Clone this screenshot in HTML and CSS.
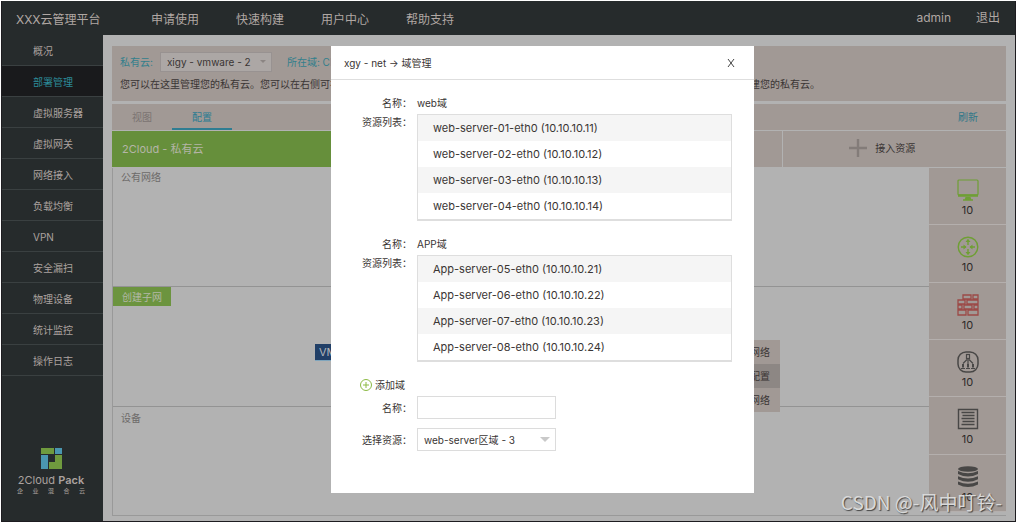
FILE: index.html
```html
<!DOCTYPE html>
<html lang="zh-CN">
<head>
<meta charset="utf-8">
<title>XXX云管理平台</title>
<link rel="stylesheet" href="styles.css">
</head>
<body>
<div class="app">
  <header class="topbar">
    <div class="brand">XXX云管理平台</div>
    <nav class="topnav">
      <a href="#">申请使用</a>
      <a href="#">快速构建</a>
      <a href="#">用户中心</a>
      <a href="#">帮助支持</a>
    </nav>
    <div class="account">
      <a href="#">admin</a>
      <a href="#">退出</a>
    </div>
  </header>

  <div class="columns">
    <aside class="sidebar">
      <nav class="sidenav">
        <a href="#">概况</a>
        <a href="#" class="current">部署管理</a>
        <a href="#">虚拟服务器</a>
        <a href="#">虚拟网关</a>
        <a href="#">网络接入</a>
        <a href="#">负载均衡</a>
        <a href="#">VPN</a>
        <a href="#">安全漏扫</a>
        <a href="#">物理设备</a>
        <a href="#">统计监控</a>
        <a href="#">操作日志</a>
      </nav>
      <div class="product">
        <svg class="product-mark" viewBox="0 0 21 21" aria-hidden="true">
          <path fill="#6f9a3e" d="M0 0h13v6H0zM14 7h7v14H8v-7h6z"/>
          <path fill="#4a96b0" d="M14 0h7v6h-7zM0 7h7v14H0z"/>
        </svg>
        <div class="product-name">2Cloud <b>Pack</b></div>
        <div class="product-sub"><span>企</span><span>业</span><span>混</span><span>合</span><span>云</span></div>
      </div>
    </aside>

    <main class="main">
      <section class="intro">
        <div class="filters">
          <label class="filter-label" for="cloud">私有云:</label>
          <span class="pick pick-dim">
            <select id="cloud"><option>xigy - vmware - 2</option></select>
          </span>
          <span class="filter-label zone">所在域: Cloud</span>
        </div>
        <p>您可以在这里管理您的私有云。您可以在右侧可视化区域中查看公有网络、子网和设备的连接关系，也可以接入新的资源，并按照业务需要来构建您的私有云。</p>
      </section>

      <div class="tabs">
        <a href="#" class="tab">视图</a>
        <a href="#" class="tab active">配置</a>
        <a href="#" class="refresh">刷新</a>
      </div>

      <div class="titlebar">
        <h1>2Cloud - 私有云</h1>
        <div class="blank"></div>
        <button type="button" class="attach">
          <svg viewBox="0 0 18 18" aria-hidden="true"><path d="M9 0v18M0 9h18" stroke="#837c79" stroke-width="2.4"/></svg>
          接入资源
        </button>
      </div>

      <div class="board">
        <div class="lanes">
          <section class="lane lane-public"><h2>公有网络</h2></section>
          <section class="lane lane-subnet"><button type="button" class="create">创建子网</button></section>
          <section class="lane lane-device"><h2>设备</h2></section>
          <div class="node">VMware</div>
          <ul class="node-menu">
            <li>管理网络</li>
            <li class="hover">修改配置</li>
            <li>删除网络</li>
          </ul>
        </div>
        <ul class="stats">
          <li>
            <svg viewBox="0 0 22 22" fill="none" stroke="#6f9f35" aria-hidden="true"><rect x="1" y="1" width="20" height="15" rx="1" stroke-width="1.2"/><path d="M1 16.5h20" stroke-width="2.5"/><path d="M8.5 18h5l1 3h-7z" fill="#6f9f35" stroke="none"/><path d="M6 21h10" stroke-width="1.5"/></svg>
            <span>10</span>
          </li>
          <li>
            <svg viewBox="0 0 22 22" fill="none" stroke="#6f9f35" aria-hidden="true"><circle cx="11" cy="11" r="9.8" stroke-width="1.4"/><path d="M11 9V4M11 13v5M9 11H4M13 11h5" stroke-width="1.4"/><path fill="#6f9f35" stroke="none" d="M11 2.800l2.500 3.200h-5zM11 19.200l2.500-3.200h-5zM6.500 8.500L9.500 11l-3 2.500zM15.500 8.500L12.500 11l3 2.500z"/></svg>
            <span>10</span>
          </li>
          <li>
            <svg viewBox="0 0 22 22" fill="none" stroke="#9c4a47" stroke-width="1.3" aria-hidden="true"><path d="M6 1h8v4H6zM16 1h5v4h-5zM1 6h7v4H1zM10 6h11v4H10zM1 11h4v4H1zM7 11h8v4H7zM17 11h4v4h-4zM1 16h8v5H1zM11 16h10v5H11z"/></svg>
            <span>10</span>
          </li>
          <li>
            <svg viewBox="0 0 22 22" fill="none" stroke="#484746" aria-hidden="true"><rect x="1" y="1" width="20" height="20" rx="8" stroke-width="1.5"/><rect x="9.500" y="3.500" width="3" height="4" stroke-width="1.200"/><path d="M11 8v5M10 8.500l-4 4M12 8.500l4 4M4 17.500h4M9 17.500h4M14 17.500h4" stroke-width="1.200"/><path d="M6 13v3.500M11 13v3.500M16 13v3.500" stroke-width="2"/></svg>
            <span>10</span>
          </li>
          <li>
            <svg viewBox="0 0 22 22" fill="none" stroke="#484746" aria-hidden="true"><path d="M1.500 1.500h19v19h-19z" stroke-width="1.400"/><path d="M4.500 4.500h13M5.500 7.500h12M4.500 10.500h13M5.500 13.500h12M4.500 16.500h13" stroke-width="1.500"/></svg>
            <span>10</span>
          </li>
          <li>
            <svg viewBox="0 0 22 22" aria-hidden="true"><g fill="#484746"><ellipse cx="11" cy="3" rx="10" ry="2.800"/><path d="M1 5q10 4.400 20 0v3q-10 5 -20 0zM1 10.300q10 4.400 20 0v3q-10 5 -20 0zM1 15.600q10 4.400 20 0v3q-10 5 -20 0z"/></g></svg>
            <span>10</span>
          </li>
        </ul>
      </div>
    </main>
  </div>

  <div class="dialog" role="dialog" aria-labelledby="dialog-title">
    <div class="dialog-head">
      <h2 id="dialog-title">xgy - net → 域管理</h2>
      <button type="button" class="close" aria-label="关闭">
        <svg viewBox="0 0 8 10" aria-hidden="true"><path d="M1 1l6 8M7 1L1 9" stroke="#444" fill="none"/></svg>
      </button>
    </div>
    <div class="dialog-body">
      <dl class="domain">
        <dt>名称：</dt><dd>web域</dd>
        <dt>资源列表：</dt>
        <dd>
          <ul class="resources">
            <li>web-server-01-eth0 (10.10.10.11)</li>
            <li>web-server-02-eth0 (10.10.10.12)</li>
            <li>web-server-03-eth0 (10.10.10.13)</li>
            <li>web-server-04-eth0 (10.10.10.14)</li>
          </ul>
        </dd>
      </dl>
      <dl class="domain">
        <dt>名称：</dt><dd>APP域</dd>
        <dt>资源列表：</dt>
        <dd>
          <ul class="resources">
            <li>App-server-05-eth0 (10.10.10.21)</li>
            <li>App-server-06-eth0 (10.10.10.22)</li>
            <li>App-server-07-eth0 (10.10.10.23)</li>
            <li>App-server-08-eth0 (10.10.10.24)</li>
          </ul>
        </dd>
      </dl>
      <form class="new-domain">
        <button type="button" class="add">
          <svg viewBox="0 0 12 12" fill="none" stroke="#8cba45" aria-hidden="true"><circle cx="6" cy="6" r="5.500"/><path d="M6 3v6M3 6h6"/></svg>
          添加域
        </button>
        <div class="field">
          <label for="name">名称：</label>
          <input id="name" type="text">
        </div>
        <div class="field">
          <label for="resource">选择资源：</label>
          <span class="pick">
            <select id="resource"><option>web-server区域 - 3</option></select>
          </span>
        </div>
      </form>
    </div>
  </div>

  <div class="watermark">CSDN @-风中叮铃-</div>
</div>
</body>
</html>
```

FILE: styles.css
```css
* {
  box-sizing: border-box;
}

body {
  margin: 0;
  padding: 1px;
  background: #fff;
  color: #3a3534;
  font: 10px/16px Inter, "Noto Sans CJK SC", sans-serif;
}

a {
  color: inherit;
  text-decoration: none;
}

h1, h2, p, ul, dl, dd {
  margin: 0;
  padding: 0;
  font-size: inherit;
  font-weight: 400;
}

ul {
  list-style: none;
}

button, input, select {
  margin: 0;
  padding: 0;
  border: 0;
  background: none;
  color: inherit;
  font: inherit;
}

.app {
  position: relative;
  display: flex;
  flex-direction: column;
  min-height: calc(100vh - 2px);
  border: solid #1d1c20;
  border-width: 0 1px 1px;
  background: #b2b2b2;
}

/* Top bar */

.topbar {
  display: flex;
  align-items: center;
  height: 34px;
  padding: 0 15px 0 14px;
  background: #262b2c;
  color: #b0a7a3;
  font-size: 12px;
}

.brand {
  width: 135px;
  padding-top: 4px;
}

.topnav {
  display: flex;
  flex: 1;
  gap: 37px;
  padding-top: 4px;
}

.account {
  display: flex;
  gap: 25px;
}

/* Side bar */

.columns {
  display: flex;
  flex: 1;
}

.sidebar {
  display: flex;
  flex-direction: column;
  justify-content: space-between;
  width: 101px;
  background: #262b2c;
  color: #aba29f;
}

.sidenav a {
  display: block;
  height: 31px;
  padding: 8px 0 0 31px;
  border-bottom: 1px solid #3a4041;
}

.sidenav .current {
  background: #191a1c;
  color: #2c8b98;
}

.product {
  display: flex;
  flex-direction: column;
  align-items: center;
  padding: 0 18px 27px 15px;
}

.product-mark {
  width: 21px;
  height: 21px;
}

.product-name {
  margin-top: 3px;
  font-size: 11px;
  white-space: nowrap;
}

.product-name b {
  font-weight: 600;
}

.product-sub {
  display: flex;
  justify-content: space-between;
  width: 100%;
  font-size: 6px;
  line-height: 6px;
}

/* Main area */

.main {
  display: flex;
  flex: 1;
  flex-direction: column;
  min-width: 0;
  padding: 11px 9px 5px 9px;
}

.intro {
  height: 55px;
  margin-bottom: 3px;
  padding: 5px 8px;
  background: #a19995;
}

.filters {
  display: flex;
  align-items: center;
  height: 21px;
}

.filter-label {
  color: #327f8c;
}

.zone {
  margin-left: 15px;
}

.intro p {
  margin-top: 4px;
  white-space: nowrap;
}

.pick {
  display: grid;
  align-items: center;
}

.pick select {
  grid-area: 1 / 1;
  width: 139px;
  height: 23px;
  padding: 0 6px;
  border: 1px solid #dcdcdc;
  border-radius: 0;
  background: #fff;
  appearance: none;
}

.pick::after {
  grid-area: 1 / 1;
  justify-self: end;
  margin-right: 6px;
  border: solid transparent;
  border-width: 5px 5px 0;
  border-top-color: #c9c9c9;
  content: "";
  pointer-events: none;
}

.pick-dim {
  margin-left: 7px;
}

.pick-dim select {
  width: 112px;
  height: 20px;
  border-color: #989291;
  background: #aca7a5;
}

.pick-dim::after {
  border-width: 3px 3px 0;
  border-top-color: #8b8583;
}

.tabs {
  display: flex;
  height: 26px;
  margin-bottom: 1px;
  padding: 0 28px 0 0;
  background: #a19995;
  line-height: 26px;
}

.tab {
  width: 60px;
  color: #7b7472;
  text-align: center;
}

.tab.active {
  border-bottom: 2px solid #2f7d92;
  color: #2b7c92;
}

.refresh {
  margin-left: auto;
  color: #2f7789;
}

.titlebar {
  display: flex;
  gap: 1px;
  height: 36px;
  margin-bottom: 1px;
}

.titlebar h1 {
  flex: 1;
  padding-left: 10px;
  background: #668f3b;
  color: #b5b5a8;
  font-size: 11px;
  line-height: 37px;
}

.blank {
  flex: 1;
  background: #a19995;
}

.attach {
  display: flex;
  flex: 0 0 25%;
  align-items: center;
  justify-content: center;
  gap: 8px;
  padding: 0 24px 3px 0;
  background: #a19995;
}

.attach svg {
  width: 18px;
  height: 18px;
}

.board {
  display: flex;
  flex: 1;
  border: solid #999;
  border-width: 0 0 1px 1px;
}

.lanes {
  position: relative;
  display: grid;
  flex: 1;
  grid-template-rows: 119px 120px 1fr;
}

.lane {
  border-bottom: 1px solid #939393;
  color: #6d6a69;
}

.lane-device {
  border-bottom: 0;
}

.lane h2 {
  padding: 1px 8px;
}

.lane-device h2 {
  padding-top: 3px;
}

.create {
  display: block;
  width: 58px;
  height: 19px;
  background: #6c943f;
  color: #b3b8a6;
}

.node {
  position: absolute;
  top: 176px;
  left: 202px;
  width: 60px;
  padding: 0 4px;
  border-bottom: 1px solid #7fa5bd;
  background: #213f67;
  color: #b0b5bb;
  font-size: 11px;
}

.node-menu {
  position: absolute;
  top: 172px;
  right: 149px;
  background: #a19995;
}

.node-menu li {
  padding: 4px 10px;
}

.node-menu .hover {
  background: #8d8784;
}

.stats {
  display: flex;
  flex-direction: column;
  width: 77px;
  margin-bottom: 3px;
}

.stats li {
  display: flex;
  flex: 1;
  flex-direction: column;
  align-items: center;
  gap: 1px;
  padding-top: 11px;
  border-bottom: 1px solid #b4afad;
  background: #a19995;
  color: #2e2a29;
  font-size: 11px;
}

.stats svg {
  width: 22px;
  height: 22px;
}

/* Dialog */

.dialog {
  position: absolute;
  top: 45px;
  left: 329px;
  width: 423px;
  padding-bottom: 42px;
  background: #fff;
}

.dialog-head {
  display: flex;
  align-items: center;
  justify-content: space-between;
  height: 34px;
  padding: 0 19px 0 13px;
  border-bottom: 1px solid #dedede;
}

.close {
  display: flex;
}

.close svg {
  width: 8px;
  height: 10px;
}

.dialog-body {
  padding: 15px 22px 0 29px;
}

.domain {
  display: grid;
  grid-template-columns: 52px 1fr;
  column-gap: 5px;
  margin-bottom: 15px;
}

.domain dt {
  text-align: right;
}

.domain dd {
  min-height: 19px;
}

.resources {
  border: 1px solid #dedede;
  border-bottom-width: 2px;
  font-size: 11px;
}

.resources li {
  padding: 5px 15px;
}

.resources li:nth-child(odd) {
  background: #f5f5f5;
}

.add {
  display: flex;
  align-items: center;
  gap: 3px;
  margin-bottom: 3px;
}

.add svg {
  width: 12px;
  height: 12px;
}

.field {
  display: grid;
  grid-template-columns: 52px 139px;
  column-gap: 5px;
  align-items: center;
  margin-bottom: 9px;
}

.field:last-child {
  margin-bottom: 0;
}

.field label {
  text-align: right;
  white-space: nowrap;
}

.field input {
  height: 23px;
  padding: 0 6px;
  border: 1px solid #dcdcdc;
}

/* Watermark */

.watermark {
  position: absolute;
  right: 13px;
  bottom: 6px;
  color: #d9d9d9;
  font: 19px/26px "Noto Sans CJK SC", sans-serif;
  text-shadow: 1px 1px 1px #444;
}
```
